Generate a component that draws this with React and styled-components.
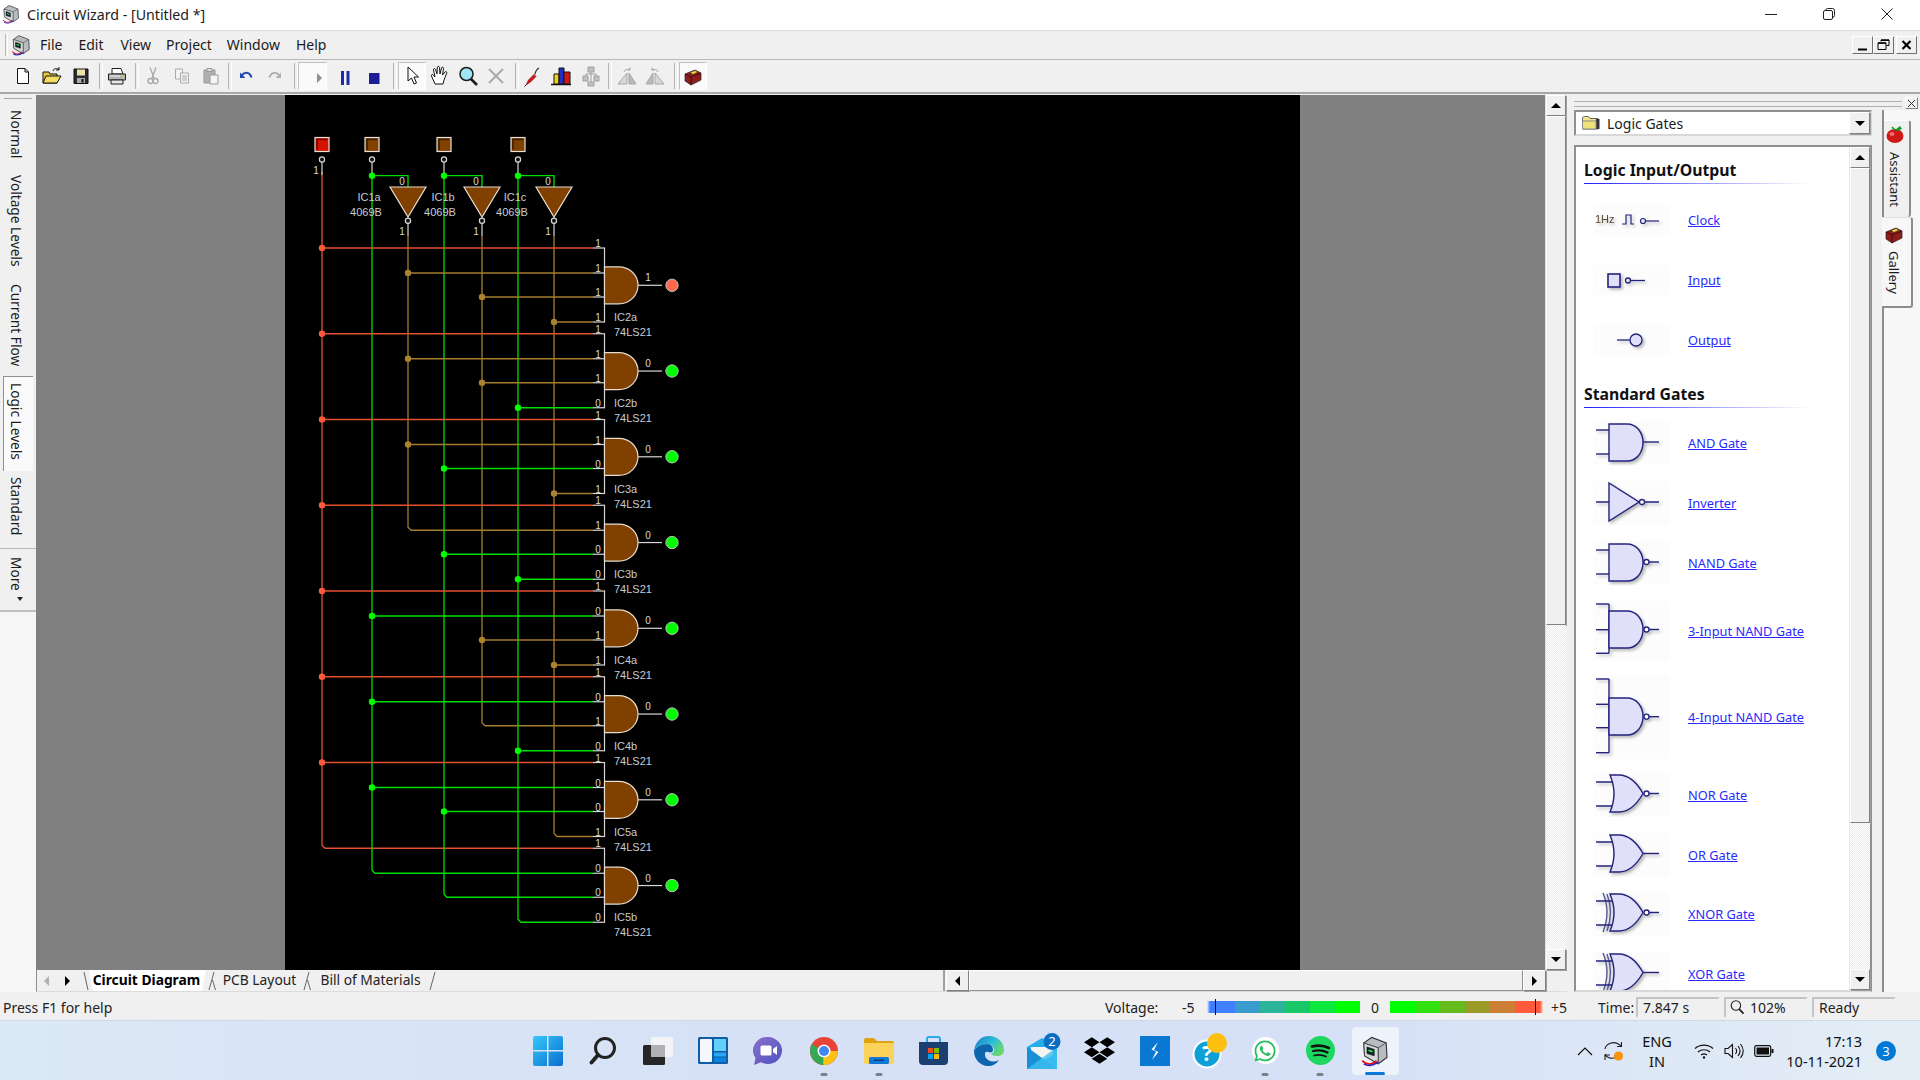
import React from 'react';
import styled, { createGlobalStyle } from 'styled-components';
import { FaWhatsapp, FaDropbox } from 'react-icons/fa';

const UI_FONT = '"Noto Sans", "Liberation Sans", sans-serif';

const GlobalStyle = createGlobalStyle`
  html, body { margin: 0; padding: 0; background: #f0f0f0; }
  * { box-sizing: border-box; }
  body { font-family: ${UI_FONT}; color: #1c1c1c; }
`;

const Window = styled.div`
  width: 1920px;
  height: 1080px;
  display: flex;
  flex-direction: column;
  overflow: hidden;
  background: #f0f0f0;
`;

/* ---------- title bar ---------- */
const TitleBar = styled.div`
  height: 30px;
  flex: none;
  background: #fff;
  display: flex;
  align-items: center;
  padding: 0 4px 2px 1px;
  font-size: 14.2px;
`;

const TitleText = styled.span`
  flex: 1;
  margin-left: 6px;
`;

const Caption = styled.div`
  width: 58px;
  height: 28px;
  display: flex;
  align-items: center;
  justify-content: center;
`;

/* ---------- menu ---------- */
const MenuBar = styled.div`
  height: 30px;
  flex: none;
  display: flex;
  align-items: center;
  border-top: 1px solid #dcdcdc;
  border-bottom: 1px solid #b8b8b8;
  padding: 0 0 1px 5px;
  font-size: 14px;
`;

const Grip = styled.div`
  width: 3px;
  height: 22px;
  flex: none;
  border-left: 1px solid #b8b8b8;
  border-right: 1px solid #fff;
`;

const MenuIconWrap = styled.div`
  width: 25px;
  display: flex;
  justify-content: center;
`;

const MenuItem = styled.span`
  padding: 0 ${(p) => p.$pad || 7}px;
`;

const MdiButtons = styled.div`
  margin-left: auto;
  display: flex;
  padding-right: 3px;
`;

const MdiButton = styled.div`
  width: 21px;
  height: 18px;
  margin-left: ${(p) => p.$ml || 0}px;
  display: flex;
  align-items: center;
  justify-content: center;
  background: #f0f0f0;
  border: 1px solid;
  border-color: #fff #707070 #707070 #fff;
`;

/* ---------- toolbar ---------- */
const ToolBar = styled.div`
  height: 34px;
  flex: none;
  display: flex;
  align-items: center;
  padding-left: 8px;
  border-bottom: 2px solid #a8a8a8;
`;

const ToolButton = styled.div`
  width: ${(p) => p.$w || 29}px;
  height: 28px;
  flex: none;
  display: flex;
  align-items: center;
  justify-content: center;
  ${(p) => p.$pressed && `
    background: #fafafa;
    border: 1px solid;
    border-color: #c0c0c0 #fff #fff #c0c0c0;
  `}
`;

const ToolSep = styled.div`
  width: ${(p) => p.$w}px;
  height: 26px;
  flex: none;
  position: relative;
  &::after {
    content: '';
    display: ${(p) => (p.$blank ? 'none' : 'block')};
    position: absolute;
    left: 50%;
    top: 0;
    bottom: 0;
    width: 2px;
    border-left: 1px solid #b4b4b4;
    border-right: 1px solid #fff;
  }
`;

/* ---------- main ---------- */
const Main = styled.div`
  flex: 1;
  display: flex;
  min-height: 0;
`;

const ViewTabs = styled.div`
  width: 36px;
  flex: none;
  display: flex;
  flex-direction: column;
  background: #f6f6f6;
`;

const ViewTabsInner = styled.div`
  height: 518px;
  background: #f0f0f0;
  border-bottom: 2px solid #c0c0c0;
  padding-top: 4px;
  display: flex;
  flex-direction: column;
  align-items: stretch;
`;

const TopRule = styled.div`
  height: 1px;
  margin: 0 4px 11px;
  background: #a8a8a8;
`;

const ViewTab = styled.div`
  writing-mode: vertical-rl;
  font-size: 13.7px;
  line-height: 28px;
  height: ${(p) => p.$h}px;
  flex: none;
  padding-top: ${(p) => p.$top || 0}px;
  padding-right: 6px;
  white-space: nowrap;
  ${(p) => p.$active && `
    background: #fafafa;
    border-top: 1px solid #909090;
    border-left: 1px solid #909090;
    margin: 0 3px;
    padding-right: 3px;
  `}
  ${(p) => p.$rule && 'border-bottom: 1px solid #b8b8b8;'}
`;

const MoreArrow = styled.span`
  display: inline-block;
  width: 0;
  height: 0;
  margin-top: 6px;
  vertical-align: middle;
  border-left: 3px solid transparent;
  border-right: 3px solid transparent;
  border-top: 4px solid #222;
`;

const Center = styled.div`
  width: 1531px;
  flex: none;
  display: flex;
  flex-direction: column;
`;

const CanvasRow = styled.div`
  height: 876px;
  flex: none;
  display: flex;
  padding-top: 1px;
`;

const Canvas = styled.div`
  width: 1509px;
  flex: none;
  background: #808080;
  padding-left: 249px;
`;

const Sheet = styled.div`
  width: 1015px;
  height: 100%;
  background: #000;
`;

const VScroll = styled.div`
  width: 21px;
  flex: none;
  display: flex;
  flex-direction: column;
  background: #f0f0f0;
  border-left: 1px solid #e0e0e0;
`;

const ScrollBtn = styled.div`
  width: ${(p) => p.$w || '100%'};
  height: ${(p) => p.$h || '21px'};
  flex: none;
  background: #f0f0f0;
  display: flex;
  align-items: center;
  justify-content: center;
  border: 1px solid;
  border-color: #fff #808080 #808080 #fff;
  box-shadow: 1px 1px 0 #a0a0a0;
`;

const Thumb = styled.div`
  height: ${(p) => p.$h}px;
  flex: none;
  background: #f0f0f0;
  border: 1px solid;
  border-color: #fff #808080 #808080 #fff;
  box-shadow: 1px 1px 0 #a0a0a0;
`;

const Track = styled.div`
  flex: 1;
  background: repeating-conic-gradient(#fdfdfd 0 25%, #ececec 0 50%) 0 0 / 2px 2px;
`;

const Arrow = styled.span`
  width: 0;
  height: 0;
  ${(p) => p.$dir === 'up' && `border-left:5px solid transparent;border-right:5px solid transparent;border-bottom:5px solid ${p.$c || '#000'};`}
  ${(p) => p.$dir === 'down' && `border-left:5px solid transparent;border-right:5px solid transparent;border-top:5px solid ${p.$c || '#000'};`}
  ${(p) => p.$dir === 'left' && `border-top:5px solid transparent;border-bottom:5px solid transparent;border-right:5px solid ${p.$c || '#000'};`}
  ${(p) => p.$dir === 'right' && `border-top:5px solid transparent;border-bottom:5px solid transparent;border-left:5px solid ${p.$c || '#000'};`}
`;

/* ---------- sheet tabs under the canvas ---------- */
const SheetTabs = styled.div`
  height: 22px;
  flex: none;
  display: flex;
  align-items: stretch;
  font-size: 13.8px;
  border-left: 1px solid #909090;
  border-bottom: 1px solid #dcdcdc;
`;

const TabArrows = styled.div`
  width: 46px;
  flex: none;
  display: flex;
  align-items: center;
  gap: 16px;
  padding-left: 7px;
`;

const SheetTab = styled.div`
  width: ${(p) => p.$w}px;
  flex: none;
  text-align: center;
  line-height: 20px;
  white-space: nowrap;
  font-weight: ${(p) => (p.$active ? 700 : 400)};
  background: ${(p) => (p.$active ? '#fff' : 'transparent')};
  color: ${(p) => (p.$active ? '#000' : '#222')};
  padding-right: ${(p) => (p.$active ? 2 : 0)}px;
  ${(p) => p.$active && 'clip-path: polygon(0 0, 100% 0, calc(100% - 4px) 100%, 4px 100%);'}
`;

const TabStroke = styled.svg`
  flex: none;
  display: block;
  align-self: center;
  fill: none;
  stroke: #666;
`;

const HScroll = styled.div`
  margin-left: auto;
  margin-right: 21px;
  width: 603px;
  display: flex;
  align-items: stretch;
  border-left: 2px solid #a0a0a0;
  padding-left: 1px;
`;

const HThumb = styled.div`
  flex: 1;
  background: #f0f0f0;
  border: 1px solid;
  border-color: #fff #909090 #909090 #fff;
`;

/* ---------- right dock ---------- */
const Dock = styled.div`
  flex: 1;
  display: flex;
  flex-direction: column;
  padding-left: 7px;
`;

const DockHead = styled.div`
  height: 16px;
  flex: none;
  display: flex;
  align-items: center;
  gap: 3px;
  padding-top: 2px;
`;

const DockGrip = styled.div`
  flex: 1;
  height: 6px;
  border-top: 1px solid #b0b0b0;
  border-bottom: 1px solid #b0b0b0;
  margin-top: 1px;
`;

const DockClose = styled.div`
  width: 13px;
  height: 12px;
  display: flex;
  align-items: center;
  justify-content: center;
  margin-right: 2px;
  border: 1px solid;
  border-color: #fff #808080 #808080 #fff;
`;

const DockBody = styled.div`
  flex: 1;
  display: flex;
  min-height: 0;
`;

const DockMain = styled.div`
  width: 298px;
  flex: none;
  display: flex;
  flex-direction: column;
  gap: 9px;
`;

const Combo = styled.div`
  height: 26px;
  flex: none;
  background: #fff;
  display: flex;
  align-items: center;
  border: 2px solid;
  border-color: #909090 #d8d8d8 #d8d8d8 #909090;
  padding-left: 5px;
  gap: 6px;
  font-size: 14px;
`;

const ComboLabel = styled.span`
  flex: 1;
`;

const GalleryFrame = styled.div`
  flex: 1;
  min-height: 0;
  display: flex;
  background: #fff;
  border: 2px solid;
  border-color: #909090 #909090 #d8d8d8 #909090;
`;

const GalleryList = styled.div`
  flex: 1;
  overflow: hidden;
  padding: 13px 0 0 8px;
`;

const GroupTitle = styled.div`
  font-size: 15.8px;
  font-weight: 700;
  line-height: 20px;
  color: #111;
  margin-top: ${(p) => p.$top || 0}px;
  &::after {
    content: '';
    display: block;
    width: 226px;
    height: 1px;
    margin-top: 3px;
    background: linear-gradient(90deg, #2020ff, #ffffff);
  }
`;

const Rows = styled.div`
  margin-top: ${(p) => p.$top}px;
`;

const GalleryRow = styled.div`
  height: ${(p) => p.$h || 60}px;
  display: flex;
  align-items: center;
`;

const IconCell = styled.div`
  width: 76px;
  margin-left: 9px;
  margin-right: 19px;
  flex: none;
  display: flex;
  align-items: center;
  background: #fcfcfc;
`;

const ItemLink = styled.a`
  font-size: 12.8px;
  color: #2a2aff;
  text-decoration: underline;
`;

const GalleryScroll = styled.div`
  width: 21px;
  flex: none;
  display: flex;
  flex-direction: column;
  border-left: 1px solid #e8e8e8;
  background: #f0f0f0;
`;

const SideTabs = styled.div`
  flex: 1;
  margin-left: 10px;
  background: #f7f7f7;
  border-left: 2px solid #8c8c8c;
  padding-top: 10px;
  display: flex;
  flex-direction: column;
`;

const SideTab = styled.div`
  height: ${(p) => p.$h}px;
  width: ${(p) => (p.$active ? 31 : 27)}px;
  flex: none;
  display: flex;
  flex-direction: column;
  align-items: center;
  font-size: 13px;
  padding-top: ${(p) => p.$pt || 0}px;
  padding-right: ${(p) => (p.$active ? 5 : 3)}px;
  gap: ${(p) => (p.$active ? 7 : 8)}px;
  margin-left: ${(p) => (p.$active ? -2 : 0)}px;
  background: ${(p) => (p.$active ? '#f7f7f7' : '#f0f0f0')};
  border-right: 2px solid #8c8c8c;
  border-top: 1px solid ${(p) => (p.$active ? '#e0e0e0' : '#fff')};
  border-bottom: ${(p) => (p.$active ? '2px solid #8c8c8c' : '0')};
  border-radius: 0 3px 3px 0;
`;

const SideLabel = styled.span`
  writing-mode: vertical-rl;
  white-space: nowrap;
`;

/* ---------- status bar ---------- */
const StatusBar = styled.div`
  height: 28px;
  flex: none;
  display: flex;
  align-items: center;
  padding: 2px 0 0 3px;
  font-size: 14px;
  color: #222;
`;

const VoltLabel = styled.span`
  width: ${(p) => p.$w}px;
  flex: none;
  white-space: nowrap;
  text-align: ${(p) => p.$align || 'left'};
  padding-left: ${(p) => p.$pl || 0}px;
`;

const VoltBar = styled.div`
  width: ${(p) => p.$w}px;
  height: 12px;
  flex: none;
  display: flex;
  position: relative;
`;

const VoltSeg = styled.div`
  flex: ${(p) => p.$grow || 1};
  background: ${(p) => p.$bg};
`;

const VoltMark = styled.div`
  position: absolute;
  top: -2px;
  bottom: -2px;
  left: ${(p) => p.$x}px;
  width: 1px;
  background: #111;
`;

const StatusBox = styled.div`
  width: 84px;
  height: 21px;
  flex: none;
  margin-left: ${(p) => p.$ml ?? 4}px;
  display: flex;
  align-items: center;
  gap: 5px;
  padding-left: ${(p) => p.$pl || 5}px;
  border: 2px solid;
  border-color: #c4c4c4 #f0f0f0 #f0f0f0 #c4c4c4;
`;

/* ---------- taskbar ---------- */
const TaskBar = styled.div`
  height: 60px;
  flex: none;
  display: flex;
  align-items: center;
  padding-left: 520px;
  background: linear-gradient(90deg, #dbe8f5 0%, #d6e1f6 40%, #d6e0f6 70%, #e3eef6 100%);
  border-top: 1px solid #cfd8e8;
`;

const TaskItem = styled.div`
  width: ${(p) => (p.$active ? 47 : 55.2)}px;
  height: ${(p) => (p.$active ? 48 : 60)}px;
  margin: ${(p) => (p.$active ? '0 4px' : '0')};
  flex: none;
  position: relative;
  display: flex;
  align-items: center;
  justify-content: center;
  border-radius: 4px;
  background: ${(p) => (p.$active ? '#eef3fb' : 'transparent')};
`;

const TaskDot = styled.span`
  position: absolute;
  left: 50%;
  bottom: ${(p) => (p.$active ? 0 : 5)}px;
  width: ${(p) => (p.$active ? 20 : 7)}px;
  height: 3px;
  border-radius: 2px;
  transform: translateX(-50%);
  background: ${(p) => (p.$active ? '#0a78d6' : '#7b8088')};
`;

const Tray = styled.div`
  margin-left: auto;
  display: flex;
  align-items: center;
  font-size: 14.5px;
  color: #111;
  padding-right: 24px;
`;

const TrayIcon = styled.div`
  width: ${(p) => p.$w}px;
  flex: none;
  display: flex;
  justify-content: center;
`;

const TrayLang = styled.div`
  width: 58px;
  text-align: center;
  line-height: 20px;
`;

const TrayClock = styled.div`
  width: 78px;
  margin-left: 2px;
  text-align: right;
  line-height: 20px;
  white-space: nowrap;
`;

const Badge = styled.div`
  width: 20px;
  height: 20px;
  margin-left: 14px;
  border-radius: 50%;
  background: #0078d4;
  color: #fff;
  font-size: 13px;
  text-align: center;
  line-height: 20px;
`;

/* ---------- icons ---------- */
const AppIcon = ({ size = 20 }) => (
  <svg width={size} height={size} viewBox="0 0 20 20">
    <path d="M3 5 8 1.500 17 5 17.500 14 12 18 3.500 13z" fill="#b9bcc0" stroke="#333" strokeWidth=".7" />
    <path d="M3 5 12 8 17 5M12 8 12 18" fill="none" stroke="#555" strokeWidth=".6" />
    <path d="M3 5 12 8 12 18 3.500 13z" fill="#d5d7d8" stroke="#444" strokeWidth=".6" />
    <path d="M5 7.500 9.500 9 9.500 13 5 11.500z" fill="#123" stroke="#111" strokeWidth=".4" />
    <path d="M6 9.500 8.500 10.500" stroke="#2f2" strokeWidth="1" />
    <path d="M2 16C5 19 8 19 11 16" fill="none" stroke="#e11" strokeWidth="1" />
    <path d="M3 18C6 20 9 19 12 17" fill="none" stroke="#22c" strokeWidth="1" />
  </svg>
);

const AppleIcon = () => (
  <svg width="20" height="20" viewBox="0 0 20 20">
    <ellipse cx="10" cy="12" rx="8.500" ry="7" fill="#d01818" />
    <ellipse cx="7" cy="10" rx="2.500" ry="2" fill="#f07070" />
    <path d="M10 6 15 2 17 5 12 7z" fill="#129a20" />
    <path d="M10 6 7 3" stroke="#129a20" strokeWidth="1.500" />
  </svg>
);

const Toolbox = ({ size = 20 }) => (
  <svg width={size} height={size} viewBox="0 0 20 20">
    <path d="M2 8 12 4 18 7 18 14 8 19 2 15z" fill="#8d1c1c" stroke="#222" strokeWidth=".7" />
    <path d="M2 8 8 11 18 7M8 11 8 19" fill="none" stroke="#300" strokeWidth=".7" />
    <path d="M7 6.500 12 4.500 15 6 10 8.500z" fill="#f4d23a" stroke="#222" strokeWidth=".5" />
  </svg>
);

const Doc = () => (
  <svg width="20" height="20" viewBox="0 0 20 20">
    <path d="M4.500 2.500h7.500l3.500 3.500v11.500h-11z" fill="#fff" stroke="#111" />
    <path d="M12 2.500v3.500h3.500" fill="none" stroke="#111" />
  </svg>
);
const OpenFolder = () => (
  <svg width="22" height="20" viewBox="0 0 22 20">
    <path d="M2 17V6h6l1 2h7v9z" fill="#e8c53a" stroke="#111" />
    <path d="M2 17 5 10h15l-4 7z" fill="#f3dd62" stroke="#111" />
    <path d="M12 5C13 2 16 2 18 3.500M18 1v3h-3" fill="none" stroke="#111" />
  </svg>
);
const Floppy = () => (
  <svg width="20" height="20" viewBox="0 0 20 20">
    <path d="M3 3h14v14.500H3z" fill="#2b2b33" stroke="#111" />
    <rect x="6" y="3.500" width="8" height="6" fill="#e9e3a8" />
    <rect x="6" y="12" width="8" height="5" fill="#aaa" />
    <rect x="10.500" y="13" width="2" height="3.500" fill="#111" />
  </svg>
);
const Printer = () => (
  <svg width="22" height="20" viewBox="0 0 22 20">
    <path d="M6 8V2.500h9L17 8z" fill="#fff" stroke="#222" />
    <path d="M2.500 8h17v6h-17z" fill="#b4b4b4" stroke="#222" />
    <path d="M5 14h12v4H5z" fill="#e8e8e8" stroke="#222" />
    <path d="M4 10h10" stroke="#eee" />
    <path d="M15.500 10h2" stroke="#e6c93a" strokeWidth="1.500" />
  </svg>
);
const Scissors = () => (
  <svg width="20" height="20" viewBox="0 0 20 20" fill="none" stroke="#a8a8a8" strokeWidth="1.300">
    <path d="M7 1.500 11 12M13 1.500 9 12" />
    <circle cx="7.500" cy="15" r="2.500" />
    <circle cx="12.500" cy="15" r="2.500" />
  </svg>
);
const CopyIcon = () => (
  <svg width="20" height="20" viewBox="0 0 20 20" fill="#f2f2f2" stroke="#ababab">
    <path d="M3.500 3h7v10h-7z" />
    <path d="M8.500 7h8v10h-8z" />
    <path d="M10 10h5M10 12h5M10 14h5" />
  </svg>
);
const PasteIcon = () => (
  <svg width="20" height="20" viewBox="0 0 20 20">
    <path d="M3 4h11v13H3z" fill="#b0b0b0" stroke="#999" />
    <path d="M6 2.500h5v3H6z" fill="#ddd" stroke="#999" />
    <path d="M9 9h8v9H9z" fill="#f4f4f4" stroke="#999" />
  </svg>
);
const UndoIcon = ({ c, flip }) => (
  <svg width="18" height="16" viewBox="0 0 18 16" style={flip ? { transform: 'scaleX(-1)' } : undefined}>
    <path d="M3 4.500V10h5.500z" fill={c} />
    <path d="M5 7C8 3.500 13 4 14.500 9.500" fill="none" stroke={c} strokeWidth="2" />
  </svg>
);
const PlayIcon = () => (
  <svg width="27" height="26" viewBox="0 0 27 26">
    <path d="M18 10v10l5-5z" fill="#8e8e8e" />
  </svg>
);
const PauseIcon = () => (
  <svg width="16" height="20" viewBox="0 0 16 20">
    <path d="M4 5h3v14H4zM9.500 5h3v14h-3z" fill="#1c2aa8" />
  </svg>
);
const StopIcon = () => (
  <svg width="16" height="20" viewBox="0 0 16 20">
    <path d="M3 7h10.500v11H3z" fill="#1c1c96" />
  </svg>
);
const Pointer = () => (
  <svg width="22" height="22" viewBox="0 0 22 22">
    <path d="M7 2v14l3.500-3 2.500 6 2.500-1-2.500-6h4.500z" fill="#fff" stroke="#111" />
  </svg>
);
const Hand = () => (
  <svg width="22" height="22" viewBox="0 0 22 22">
    <path d="M6 19 2.500 11c-.6-1.500 1-2 1.800-1L6 12 4.500 5c-.3-1.500 1.500-2 2-.6L8 9l.3-6.500c0-1.500 2-1.500 2.200 0L11 9l1.500-6c.4-1.400 2.200-1 2 .4L13.500 10l2.500-3c1-1 2.300 0 1.700 1.200L15 15l-1 4z" fill="#fff" stroke="#111" />
  </svg>
);
const Magnifier = ({ lens = '#9fe6f5', c = '#1c1c1c', w = 22 }) => (
  <svg width={w} height={w} viewBox="0 0 22 22">
    <circle cx="9.500" cy="9" r="6.500" fill={lens} stroke={c} strokeWidth="1.500" />
    <path d="M14 14 20 20" stroke={c} strokeWidth="2.600" />
  </svg>
);
const GreyX = () => (
  <svg width="20" height="20" viewBox="0 0 20 20">
    <path d="M3 3 17 17M17 3 3 17" stroke="#a6a6a6" strokeWidth="1.800" />
  </svg>
);
const Probe = () => (
  <svg width="22" height="22" viewBox="0 0 22 22">
    <path d="M4 20 6.500 15 12 9.500 14 11.500 8.500 17z" fill="#d8141c" stroke="#700" strokeWidth=".6" />
    <path d="M13 9.500C13.500 6 15 4 17 3" fill="none" stroke="#333" strokeWidth="1.200" />
    <path d="M4 20 2.500 21.500" stroke="#222" />
  </svg>
);
const Bars = () => (
  <svg width="22" height="22" viewBox="0 0 22 22">
    <path d="M1 19.500h20" stroke="#111" strokeWidth="1.500" />
    <path d="M4 9h5v10H4z" fill="#f0d020" stroke="#111" />
    <path d="M9 3h5v16H9z" fill="#2030c0" stroke="#111" />
    <path d="M14 7h6v12h-6z" fill="#d01818" stroke="#111" />
  </svg>
);
const GreyCircuit = () => (
  <svg width="22" height="22" viewBox="0 0 22 22" fill="#c0c0c0" stroke="#a0a0a0">
    <path d="M10 2h6v5h-6zM5 11h5v5H5zM16 11h5v5h-5zM10 17h6v4h-6z" />
    <path d="M13 7v10M8 11V9h10v2" fill="none" />
  </svg>
);
const GreyTri = ({ flip }) => (
  <svg width="22" height="20" viewBox="0 0 22 20" style={flip ? { transform: 'scaleX(-1)' } : undefined}>
    <path d="M2 18 11 7v11z" fill="#d8d8d8" stroke="#a8a8a8" />
    <path d="M13 18V7l7 11z" fill="#b8b8b8" stroke="#a8a8a8" />
    <path d="M8 6C9 3 12 3 14 4M14 1.500V4h-2.500" fill="none" stroke="#a0a0a0" />
  </svg>
);
const FolderTiny = () => (
  <svg width="20" height="18" viewBox="0 0 20 18">
    <path d="M1.500 15V4c0-1 1-1.500 2-1.500h4l1.500 2h8v10.500z" fill="#f0e58a" stroke="#666" />
    <path d="M15 5h3.500v10H15z" fill="#333" />
    <path d="M1.500 15 1.500 7H15v8z" fill="#efe27a" stroke="#888" />
  </svg>
);

/* gallery symbols: drawn 76 wide, inputs left, outputs right */
const INK = '#23237f';
const BODY = '#e0e0fb';

const Shadowed = styled.svg`
  display: block;
  filter: drop-shadow(2px 2.5px 1.5px rgba(60, 60, 60, 0.35));
  overflow: visible;
`;

const Bubble = ({ cx, cy }) => <circle cx={cx} cy={cy} r="2.500" fill="#fff" stroke={INK} strokeWidth="1.300" />;

const andBody = (top) => `M16 ${top}h18c9 0 16 8 16 18.500s-7 18.500-16 18.500H16z`;

const AndSym = ({ h = 44, top = 3, inputs = [9, 33], out = 21, bubble, bar }) => (
  <Shadowed width="76" height={h} viewBox={`0 0 76 ${h}`} fill="none" stroke={INK} strokeWidth="1.400">
    {inputs.map((y) => <path key={y} d={`M3 ${y}H16`} />)}
    {bar && <path d={`M16 ${inputs[0]}V${inputs[inputs.length - 1]}`} />}
    <path d={andBody(top)} fill={BODY} />
    <path d={`M${bubble ? 56 : 50} ${out}H66`} />
    {bubble && <Bubble cx={53.500} cy={out} />}
  </Shadowed>
);

const InverterSym = () => (
  <Shadowed width="76" height="44" viewBox="0 0 76 44" fill="none" stroke={INK} strokeWidth="1.400">
    <path d="M3 21H16M51 21H66" />
    <path d="M16 2V40L46 21z" fill={BODY} />
    <Bubble cx={49} cy={21} />
  </Shadowed>
);

const OrSym = ({ bubble, xor }) => (
  <Shadowed width="76" height="44" viewBox="0 0 76 44" fill="none" stroke={INK} strokeWidth="1.400">
    {xor && <path d="M10 1Q18 20 10 40M14 2Q21 20 14 39" stroke="#555a90" />}
    <path d="M3 9H20M3 33H20" />
    <path d="M17 2H26C36 2 44 10 50 20.500 44 31 36 39 26 39H17Q25 20.500 17 2z" fill={BODY} />
    <path d={`M${bubble ? 56 : 50} 20.500H66`} />
    {bubble && <Bubble cx={53.500} cy={20.500} />}
  </Shadowed>
);

const ClockSym = () => (
  <Shadowed width="76" height="30" viewBox="0 0 76 30" fill="none" stroke={INK} strokeWidth="1.200">
    <text x="2" y="18" fontSize="11" fill="#5a4a30" stroke="none" fontFamily="Liberation Sans, sans-serif">1Hz</text>
    <path d="M29 19H33V10H38V19H41" />
    <circle cx="50" cy="16" r="2.500" />
    <path d="M53 16H66" />
  </Shadowed>
);

const InputSym = () => (
  <Shadowed width="76" height="30" viewBox="0 0 76 30" fill="none" stroke={INK} strokeWidth="1.300">
    <rect x="15" y="9" width="12" height="13" fill={BODY} strokeWidth="1.600" />
    <circle cx="35" cy="15.500" r="2.500" />
    <path d="M38 15.500H52" />
  </Shadowed>
);

const OutputSym = () => (
  <Shadowed width="76" height="30" viewBox="0 0 76 30" fill="none" stroke={INK} strokeWidth="1.300">
    <path d="M24 15H37" />
    <circle cx="43" cy="15" r="6" fill={BODY} />
  </Shadowed>
);

/* ---------- circuit drawing ---------- */
const RED = '#e5512f';
const RED_DOT = '#ff5a3c';
const GREEN = '#00e000';
const GREEN_DOT = '#00ff00';
const TAN = '#a47c2c';
const TAN_DOT = '#ab832f';
const PIN = '#d8d8d8';
const COPPER = '#7f4000';

const GATE_COUNT = 8;
const gateTop = (i) => 248 + i * 85.75;
const PIN_OFF = [0, 25, 49, 74];
const GATE_NAMES = ['IC2a', 'IC2b', 'IC3a', 'IC3b', 'IC4a', 'IC4b', 'IC5a', 'IC5b'];

// bus x per input bit: index 0 = always high, 1..3 true or inverted rails
const RAILS = [
  { hi: { x: 322, c: RED, dot: RED_DOT } },
  { lo: { x: 372, c: GREEN, dot: GREEN_DOT }, hi: { x: 408, c: TAN, dot: TAN_DOT } },
  { lo: { x: 444, c: GREEN, dot: GREEN_DOT }, hi: { x: 482, c: TAN, dot: TAN_DOT } },
  { lo: { x: 518, c: GREEN, dot: GREEN_DOT }, hi: { x: 554, c: TAN, dot: TAN_DOT } },
];

const gateBits = (i) => [1, (i >> 2) & 1 ? 0 : 1, (i >> 1) & 1 ? 0 : 1, i & 1 ? 0 : 1];

const railFor = (pin, bit) => (bit ? RAILS[pin].hi : RAILS[pin].lo);

// the last gate that taps a rail is where it turns the corner
const lastUse = (pin, bit) => {
  let last = -1;
  for (let i = 0; i < GATE_COUNT; i += 1) {
    if (gateBits(i)[pin] === bit) last = i;
  }
  return last;
};

const CIRCUIT_TEXT = { fontFamily: '"Liberation Sans", sans-serif', stroke: 'none' };
const Label = ({ x, y, size = 11, children, anchor = 'middle', fill = PIN }) => (
  <text x={x} y={y} fontSize={size} textAnchor={anchor} style={{ ...CIRCUIT_TEXT, fill }}>{children}</text>
);

const RailWires = () => {
  const wires = [];
  RAILS.forEach((rail, pin) => {
    [['hi', 1], ['lo', 0]].forEach(([key, bit]) => {
      const r = rail[key];
      if (!r) return;
      const last = lastUse(pin, bit);
      const y = gateTop(last) + PIN_OFF[pin];
      let start = 175;
      if (r.c === RED) start = 172;
      if (r.c === TAN) start = 236;
      wires.push(
        <path
          key={`${pin}${key}`}
          d={`M${r.x} ${start}V${y - 3}L${r.x + 3} ${y}H593`}
          fill="none"
          stroke={r.c}
          strokeWidth="1.300"
        />,
      );
    });
  });
  return wires;
};

const Gate = ({ index }) => {
  const top = gateTop(index);
  const bits = gateBits(index);
  const on = index === 0;
  const outY = top + 37.300;
  return (
    <g>
      {bits.map((bit, pin) => {
        const y = top + PIN_OFF[pin];
        const rail = railFor(pin, bit);
        return (
          <g key={pin}>
            {index !== lastUse(pin, bit) && <path d={`M${rail.x} ${y}H593`} stroke={rail.c} strokeWidth="1.300" fill="none" />}
            {index !== lastUse(pin, bit) && <circle cx={rail.x} cy={y} r="3.200" fill={rail.dot} />}
            <path d={`M593 ${y}H604.500`} stroke={PIN} strokeWidth="1.200" />
            <Label x={598} y={y - 1} size={10}>{bit}</Label>
          </g>
        );
      })}
      <path d={`M604.500 ${top - 0.500}V${top + 74.500}`} stroke={PIN} strokeWidth="1.200" />
      <path
        d={`M604.500 ${top + 18.800}h14c12 0 19.500 9 19.500 18.500s-7.500 18.500-19.500 18.500h-14z`}
        fill={COPPER}
        stroke="#e6dcd0"
        strokeWidth="1.200"
      />
      <path d={`M638 ${outY}H662`} stroke={PIN} strokeWidth="1.200" />
      <Label x={648} y={outY - 4} size={10}>{on ? 1 : 0}</Label>
      <circle cx="672" cy={outY} r="6.200" fill={on ? '#ff6a4e' : GREEN_DOT} stroke="#bdbdbd" strokeWidth="1" />
      <Label x={614} y={top + 73} anchor="start" fill="#c4ccd8">{GATE_NAMES[index]}</Label>
      <Label x={614} y={top + 88} anchor="start" fill="#c4ccd8">74LS21</Label>
    </g>
  );
};

const Inverter = ({ railX, x, name }) => (
  <g>
    <Label x={x - 39} y={201} fill="#c4ccd8">{name}</Label>
    <Label x={x - 42} y={216} fill="#c4ccd8">4069B</Label>
    <path d={`M${railX} 175.700H${x}V187`} fill="none" stroke={GREEN} strokeWidth="1.300" />
    <circle cx={railX} cy="175.700" r="3.200" fill={GREEN_DOT} />
    <Label x={x - 6} y={185} size={10}>0</Label>
    <path d={`M${x - 18} 187H${x + 18}L${x} 217z`} fill={COPPER} stroke="#e6dcd0" strokeWidth="1.200" />
    <circle cx={x} cy="220.700" r="2.600" fill="#111" stroke={PIN} strokeWidth="1.200" />
    <path d={`M${x} 223V236`} stroke={PIN} strokeWidth="1.200" />
    <Label x={x - 6} y={235} size={10}>1</Label>
  </g>
);

const InputSwitch = ({ x, on }) => (
  <g>
    <rect x={x - 7} y="137.500" width="14" height="14" fill={on ? '#d41400' : COPPER} stroke="#e8e0d8" strokeWidth="1.200" />
    <path d={`M${x - 5} 149.500V139.500H${x + 5}`} fill="none" stroke={on ? '#700' : '#3c2000'} strokeWidth="1.600" />
    <circle cx={x} cy="159.500" r="2.600" fill="#111" stroke={PIN} strokeWidth="1.200" />
    <path d={`M${x} 162V175`} stroke={PIN} strokeWidth="1.200" />
  </g>
);

const Circuit = () => (
  <svg width="1015" height="875" viewBox="285 95 1015 875" style={{ display: 'block' }}>
    <RailWires />
    {[322, 372, 444, 518].map((x, i) => <InputSwitch key={x} x={x} on={i === 0} />)}
    <Label x={316} y={174} size={10}>1</Label>
    <Inverter railX={372} x={408} name="IC1a" />
    <Inverter railX={444} x={482} name="IC1b" />
    <Inverter railX={518} x={554} name="IC1c" />
    {GATE_NAMES.map((name, i) => <Gate key={name} index={i} />)}
  </svg>
);

/* ---------- taskbar icons ---------- */
const WinLogo = () => (
  <svg width="30" height="30" viewBox="0 0 30 30">
    <defs>
      <linearGradient id="winG" x1="0" y1="0" x2="1" y2="1">
        <stop offset="0" stopColor="#35c8fa" />
        <stop offset="1" stopColor="#0a6fd0" />
      </linearGradient>
    </defs>
    <path d="M0 2q0-2 2-2h12v14H0zM15.500 0H28q2 0 2 2v12H15.500zM0 15.500h14V30H2q-2 0-2-2zM15.500 15.500H30V28q0 2-2 2H15.500z" fill="url(#winG)" />
  </svg>
);
const SearchIcon = () => (
  <svg width="28" height="30" viewBox="0 0 28 30" fill="none" stroke="#222" strokeLinecap="round">
    <circle cx="16" cy="12" r="9.500" strokeWidth="3" />
    <path d="M9 19 2.500 26.500" strokeWidth="3.800" />
  </svg>
);
const TaskView = () => (
  <svg width="30" height="28" viewBox="0 0 30 28">
    <rect x="8" y="0" width="22" height="20" rx="1.500" fill="#f4f4f6" />
    <rect x="0" y="8" width="22" height="20" rx="1.500" fill="#262626" />
    <rect x="8" y="8" width="14" height="12" fill="#aeb0b4" />
  </svg>
);
const Widgets = () => (
  <svg width="30" height="27" viewBox="0 0 30 27">
    <rect width="30" height="27" rx="1.500" fill="#0f5ca8" />
    <rect x="2" y="2" width="12" height="23" rx="1" fill="#f4f7fb" />
    <rect x="16" y="2" width="12" height="12" fill="#63d0fc" />
    <rect x="16" y="15.500" width="12" height="4" fill="#2ba6f0" />
    <rect x="16" y="20.500" width="12" height="4.500" fill="#0d84e0" />
  </svg>
);
const ChatIcon = () => (
  <svg width="30" height="30" viewBox="0 0 30 30">
    <defs>
      <linearGradient id="chatG" x1="0" y1="0" x2="1" y2="1">
        <stop offset="0" stopColor="#8a70c8" />
        <stop offset="1" stopColor="#4f52c4" />
      </linearGradient>
    </defs>
    <path d="M15 1a14 13.500 0 1 1-7 25.200L1 29l1.500-7A14 13.500 0 0 1 15 1z" fill="url(#chatG)" />
    <rect x="7.500" y="9.500" width="11" height="10" rx="1.500" fill="#fff" />
    <path d="M20 13l4-3v9l-4-3z" fill="#fff" />
  </svg>
);
const ChromeIcon = () => (
  <svg width="28" height="28" viewBox="0 0 28 28">
    <circle cx="14" cy="14" r="14" fill="#ea4335" />
    <path d="M14 14H28A14 14 0 0 1 14 28L7 16z" fill="#fbc116" />
    <path d="M14 14 13 28A14 14 0 0 1 1.900 7z" fill="#34a853" />
    <circle cx="14" cy="14" r="6.500" fill="#fff" />
    <circle cx="14" cy="14" r="5" fill="#4285f4" />
  </svg>
);
const FolderIcon = () => (
  <svg width="30" height="26" viewBox="0 0 30 26">
    <path d="M0 2q0-2 2-2h8l3 3h15q2 0 2 2v3H0z" fill="#e0a30f" />
    <path d="M0 5h30v19q0 2-2 2H2q-2 0-2-2z" fill="#fbd35a" />
    <rect x="5" y="19" width="20" height="7" rx="1.500" fill="#0f78d4" />
    <rect x="10" y="21.500" width="10" height="1.500" fill="#063e80" />
  </svg>
);
const StoreIcon = () => (
  <svg width="29" height="29" viewBox="0 0 29 29">
    <path d="M8 7V3q0-2 2-2h9q2 0 2 2v4" fill="none" stroke="#2aa8e8" strokeWidth="2" />
    <path d="M0 6h29v19q0 4-4 4H4q-4 0-4-4z" fill="#1c3f72" />
    <rect x="9" y="12" width="5" height="5" fill="#f25022" />
    <rect x="15" y="12" width="5" height="5" fill="#7fba00" />
    <rect x="9" y="18" width="5" height="5" fill="#00a4ef" />
    <rect x="15" y="18" width="5" height="5" fill="#ffb900" />
  </svg>
);
const EdgeIcon = () => (
  <svg width="30" height="30" viewBox="0 0 30 30">
    <defs>
      <linearGradient id="edgeG" x1="0" y1="0" x2="1" y2=".6">
        <stop offset="0" stopColor="#1677c8" />
        <stop offset=".6" stopColor="#2dc0d8" />
        <stop offset="1" stopColor="#6bd86a" />
      </linearGradient>
    </defs>
    <path d="M15 0c9 0 15 6.500 15 14 0 4-3 6-7 6-3 0-5-1-6-2 2-1 3-2 3-4 0-3-3-6-7-6C7 8 2 11 0 15 1 6 7 0 15 0z" fill="url(#edgeG)" />
    <path d="M0 15c2-4 7-7 13-7 4 0 6 3 6 6 0 2-2 3-5 2-3-1-4 2-2 6 2 3 7 5 13 2-3 4-6 6-11 6-8 0-14-7-14-15z" fill="#0f65ad" />
  </svg>
);
const MailIcon = () => (
  <svg width="34" height="36" viewBox="0 0 34 36">
    <path d="M0 14 15 5l15 9v22H0z" fill="#27aee8" />
    <path d="M4 14h22v8l-11 6-11-6z" fill="#f4f4f2" />
    <path d="M0 14 30 36H0z" fill="#1a8fd8" />
    <path d="M0 36 30 14v22z" fill="#3cc0f0" opacity=".8" />
    <circle cx="25" cy="8.500" r="8.500" fill="#0a6fc4" />
    <text x="25" y="13" textAnchor="middle" fontSize="13" fill="#fff" fontFamily="Noto Sans, sans-serif">2</text>
  </svg>
);
const STile = () => (
  <svg width="30" height="30" viewBox="0 0 30 30">
    <rect width="30" height="30" fill="#0a78d2" />
    <path d="M18 6 11.500 13.500 16 15.500 12 24 18.500 16 14 14z" fill="#fff" />
  </svg>
);
const HelpIcon = () => (
  <svg width="36" height="36" viewBox="0 0 36 36">
    <circle cx="15" cy="21" r="13.500" fill="#0d9fd8" stroke="#fff" strokeWidth="2" />
    <text x="15" y="28" textAnchor="middle" fontSize="21" fontWeight="700" fill="#fff" fontFamily="Noto Sans, sans-serif">?</text>
    <circle cx="25" cy="10" r="10" fill="#fdc010" />
  </svg>
);
const SpotifyIcon = () => (
  <svg width="29" height="29" viewBox="0 0 29 29" fill="none" stroke="#111" strokeLinecap="round">
    <circle cx="14.500" cy="14.500" r="14.500" fill="#1ed760" stroke="none" />
    <path d="M6 10.500c6-1.500 12-1 17 1.500" strokeWidth="2.600" />
    <path d="M7 15c5-1 10-.8 14.500 1.500" strokeWidth="2.200" />
    <path d="M8 19.500c4-1 9-.5 12 1" strokeWidth="1.800" />
  </svg>
);
const WhatsAppWrap = styled.div`
  width: 27px;
  height: 27px;
  display: flex;
  align-items: center;
  justify-content: center;
  border-radius: 50%;
  background: #fff;
  color: #22c15e;
`;

const Chevron = () => (
  <svg width="16" height="10" viewBox="0 0 16 10" fill="none" stroke="#111" strokeWidth="1.200">
    <path d="M1 9 8 2l7 7" />
  </svg>
);
const SyncIcon = () => (
  <svg width="22" height="22" viewBox="0 0 22 22" fill="none" stroke="#222" strokeWidth="1.100">
    <path d="M2 9C3 4 10 0 17 5l1.500 1.500M18.500 2v4.500H14" />
    <path d="M14 17C8 20 3 17 2 14M2 20v-5h5" />
    <circle cx="15.500" cy="16" r="4.600" fill="#f7920f" stroke="none" />
  </svg>
);
const Wifi = () => (
  <svg width="20" height="16" viewBox="0 0 20 16" fill="none" stroke="#111" strokeWidth="1.200">
    <path d="M1 5.500c5-4.500 13-4.500 18 0M4 9c3.500-3 8.500-3 12 0M7 12c2-1.500 4-1.500 6 0" />
    <circle cx="10" cy="14.500" r="1.200" fill="#111" stroke="none" />
  </svg>
);
const Speaker = () => (
  <svg width="20" height="16" viewBox="0 0 20 16" fill="none" stroke="#111" strokeWidth="1.100">
    <path d="M1 5.500h3L8.500 1.500v13L4 10.500H1z" />
    <path d="M11.500 5c1.500 2 1.500 4 0 6M14 3c2.500 3 2.500 7 0 10M16.500 1c3.500 4.500 3.500 9.500 0 14" />
  </svg>
);
const Battery = () => (
  <svg width="20" height="12" viewBox="0 0 20 12">
    <rect x=".7" y=".7" width="16" height="10.600" rx="1.800" fill="none" stroke="#111" strokeWidth="1.200" />
    <rect x="2.500" y="2.500" width="12.500" height="7" fill="#111" />
    <rect x="17.500" y="4" width="2" height="4" fill="#111" />
  </svg>
);

const MinIcon = () => <svg width="12" height="10" viewBox="0 0 12 10"><path d="M0 5.500h12" stroke="#222" /></svg>;
const RestoreIcon = () => (
  <svg width="12" height="12" viewBox="0 0 12 12" fill="none" stroke="#222">
    <rect x=".5" y="2.500" width="9" height="9" rx="1.500" />
    <path d="M3 2.500V1.800Q3 .5 4.500 .5h5Q11.500 .5 11.500 2.500v5Q11.500 9 10 9h-.5" />
  </svg>
);
const CloseIcon = () => <svg width="12" height="12" viewBox="0 0 12 12"><path d="M.5.5l11 11M11.500.5l-11 11" stroke="#222" /></svg>;
const MdiX = () => <svg width="11" height="10" viewBox="0 0 11 10"><path d="M1.500 1l8 8M9.500 1l-8 8" stroke="#000" strokeWidth="2.200" /></svg>;
const MdiMin = () => <svg width="11" height="12" viewBox="0 0 11 12"><path d="M1 10.500h9" stroke="#000" strokeWidth="2" /></svg>;
const MdiRestore = () => (
  <svg width="13" height="11" viewBox="0 0 13 11" fill="none" stroke="#000">
    <path d="M4 2.500V1h8v5.500H9.500" strokeWidth="1" />
    <path d="M1 4h8v6.500H1z" />
    <path d="M1 4h8M4 1.300h8" strokeWidth="1.500" />
  </svg>
);

const MENU = [['File', 7], ['Edit', 9], ['View', 8], ['Project', 7], ['Window', 8], ['Help', 8]];

const GROUP_ONE = [
  { label: 'Clock', icon: <ClockSym /> },
  { label: 'Input', icon: <InputSym /> },
  { label: 'Output', icon: <OutputSym /> },
];

const GROUP_TWO = [
  { label: 'AND Gate', icon: <AndSym /> },
  { label: 'Inverter', icon: <InverterSym /> },
  { label: 'NAND Gate', icon: <AndSym bubble /> },
  { label: '3-Input NAND Gate', h: 76, icon: <AndSym bubble bar h={60} top={10} inputs={[3, 28.700, 52.300]} out={28.500} /> },
  { label: '4-Input NAND Gate', h: 95, icon: <AndSym bubble bar h={84} top={23} inputs={[4, 29.300, 52.700, 77.700]} out={41.700} /> },
  { label: 'NOR Gate', h: 61, icon: <OrSym bubble /> },
  { label: 'OR Gate', h: 59, icon: <OrSym /> },
  { label: 'XNOR Gate', icon: <OrSym bubble xor /> },
  { label: 'XOR Gate', icon: <OrSym xor /> },
];

const SCALE_LOW = ['#4080ff', '#3a9ccc', '#2cb59a', '#18c868', '#0ce840', '#00ff00'];
const SCALE_HIGH = ['#00ff00', '#33e010', '#66bb1c', '#999a28', '#cc7f34', '#ff5a3c'];

const TASK_ICONS = [
  { id: 'win', icon: <WinLogo /> },
  { id: 'search', icon: <SearchIcon /> },
  { id: 'view', icon: <TaskView /> },
  { id: 'widgets', icon: <Widgets /> },
  { id: 'chat', icon: <ChatIcon /> },
  { id: 'chrome', icon: <ChromeIcon />, dot: true },
  { id: 'files', icon: <FolderIcon />, dot: true },
  { id: 'store', icon: <StoreIcon /> },
  { id: 'edge', icon: <EdgeIcon /> },
  { id: 'mail', icon: <MailIcon /> },
  { id: 'dropbox', icon: <FaDropbox size={31} color="#000" /> },
  { id: 'stile', icon: <STile /> },
  { id: 'help', icon: <HelpIcon /> },
  { id: 'whatsapp', icon: <WhatsAppWrap><FaWhatsapp size={24} /></WhatsAppWrap>, dot: true },
  { id: 'spotify', icon: <SpotifyIcon />, dot: true },
];

const App = () => (
  <Window>
    <GlobalStyle />
    <TitleBar>
      <AppIcon />
      <TitleText>Circuit Wizard - [Untitled *]</TitleText>
      <Caption><MinIcon /></Caption>
      <Caption><RestoreIcon /></Caption>
      <Caption><CloseIcon /></Caption>
    </TitleBar>

    <MenuBar>
      <Grip />
      <MenuIconWrap><AppIcon size={22} /></MenuIconWrap>
      {MENU.map(([name, pad]) => <MenuItem key={name} $pad={pad}>{name}</MenuItem>)}
      <MdiButtons>
        <MdiButton><MdiMin /></MdiButton>
        <MdiButton><MdiRestore /></MdiButton>
        <MdiButton $ml={2}><MdiX /></MdiButton>
      </MdiButtons>
    </MenuBar>

    <ToolBar>
      <ToolButton><Doc /></ToolButton>
      <ToolButton><OpenFolder /></ToolButton>
      <ToolButton><Floppy /></ToolButton>
      <ToolSep $w={7} />
      <ToolButton><Printer /></ToolButton>
      <ToolSep $w={7} />
      <ToolButton><Scissors /></ToolButton>
      <ToolButton><CopyIcon /></ToolButton>
      <ToolButton><PasteIcon /></ToolButton>
      <ToolSep $w={6} />
      <ToolButton><UndoIcon c="#1e46b4" /></ToolButton>
      <ToolButton><UndoIcon c="#b0b0b0" flip /></ToolButton>
      <ToolSep $w={9} />
      <ToolButton $pressed><PlayIcon /></ToolButton>
      <ToolSep $w={3} $blank />
      <ToolButton><PauseIcon /></ToolButton>
      <ToolButton><StopIcon /></ToolButton>
      <ToolSep $w={10} />
      <ToolButton $pressed $w={28}><Pointer /></ToolButton>
      <ToolButton $w={28}><Hand /></ToolButton>
      <ToolButton $w={28}><Magnifier /></ToolButton>
      <ToolButton $w={28}><GreyX /></ToolButton>
      <ToolSep $w={9} />
      <ToolButton $w={28}><Probe /></ToolButton>
      <ToolButton $w={28}><Bars /></ToolButton>
      <ToolButton $w={28}><GreyCircuit /></ToolButton>
      <ToolSep $w={10} />
      <ToolButton $w={28}><GreyTri /></ToolButton>
      <ToolButton $w={28}><GreyTri flip /></ToolButton>
      <ToolSep $w={10} />
      <ToolButton $pressed $w={28}><Toolbox size={20} /></ToolButton>
    </ToolBar>

    <Main>
      <ViewTabs>
        <ViewTabsInner>
          <TopRule />
          <ViewTab $h={65}>Normal</ViewTab>
          <ViewTab $h={109}>Voltage Levels</ViewTab>
          <ViewTab $h={92}>Current Flow</ViewTab>
          <ViewTab $h={95} $active $top={6}>Logic Levels</ViewTab>
          <ViewTab $h={78} $top={6} $rule>Standard</ViewTab>
          <ViewTab $h={60} $top={8}>More<MoreArrow /></ViewTab>
        </ViewTabsInner>
      </ViewTabs>

      <Center>
        <CanvasRow>
          <Canvas>
            <Sheet><Circuit /></Sheet>
          </Canvas>
          <VScroll>
            <ScrollBtn><Arrow $dir="up" /></ScrollBtn>
            <Thumb $h={509} />
            <Track />
            <ScrollBtn><Arrow $dir="down" /></ScrollBtn>
          </VScroll>
        </CanvasRow>
        <SheetTabs>
          <TabArrows>
            <Arrow $dir="left" $c="#b0b0b0" />
            <Arrow $dir="right" />
          </TabArrows>
          <TabStroke width="6" height="20" viewBox="0 0 6 20"><path d="M1 1 5 19" /></TabStroke>
          <SheetTab $w={117} $active>Circuit Diagram</SheetTab>
          <TabStroke width="12" height="20" viewBox="0 0 12 20"><path d="M8 1 3 19M6.500 9 9.500 19" /></TabStroke>
          <SheetTab $w={83}>PCB Layout</SheetTab>
          <TabStroke width="12" height="20" viewBox="0 0 12 20"><path d="M8 1 3 19M6.500 9 9.500 19" /></TabStroke>
          <SheetTab $w={115}>Bill of Materials</SheetTab>
          <TabStroke width="8" height="20" viewBox="0 0 8 20"><path d="M7 1 2 19" /></TabStroke>
          <HScroll>
            <ScrollBtn $w="23px" $h="100%"><Arrow $dir="left" /></ScrollBtn>
            <HThumb />
            <ScrollBtn $w="23px" $h="100%"><Arrow $dir="right" /></ScrollBtn>
          </HScroll>
        </SheetTabs>
      </Center>

      <Dock>
        <DockHead>
          <DockGrip />
          <DockClose><svg width="9" height="9" viewBox="0 0 9 9"><path d="M1 1l7 7M8 1 1 8" stroke="#333" /></svg></DockClose>
        </DockHead>
        <DockBody>
          <DockMain>
            <Combo>
              <FolderTiny />
              <ComboLabel>Logic Gates</ComboLabel>
              <ScrollBtn $w="21px" $h="22px"><Arrow $dir="down" /></ScrollBtn>
            </Combo>
            <GalleryFrame>
              <GalleryList>
                <GroupTitle>Logic Input/Output</GroupTitle>
                <Rows $top={6}>
                  {GROUP_ONE.map((row) => (
                    <GalleryRow key={row.label}>
                      <IconCell>{row.icon}</IconCell>
                      <ItemLink>{row.label}</ItemLink>
                    </GalleryRow>
                  ))}
                </Rows>
                <GroupTitle $top={14}>Standard Gates</GroupTitle>
                <Rows $top={5}>
                  {GROUP_TWO.map((row) => (
                    <GalleryRow key={row.label} $h={row.h}>
                      <IconCell>{row.icon}</IconCell>
                      <ItemLink>{row.label}</ItemLink>
                    </GalleryRow>
                  ))}
                </Rows>
              </GalleryList>
              <GalleryScroll>
                <ScrollBtn><Arrow $dir="up" /></ScrollBtn>
                <Thumb $h={655} />
                <Track />
                <ScrollBtn><Arrow $dir="down" /></ScrollBtn>
              </GalleryScroll>
            </GalleryFrame>
          </DockMain>
          <SideTabs>
            <SideTab $h={97} $pt={3}>
              <AppleIcon />
              <SideLabel>Assistant</SideLabel>
            </SideTab>
            <SideTab $h={91} $active $pt={6}>
              <Toolbox size={20} />
              <SideLabel>Gallery</SideLabel>
            </SideTab>
          </SideTabs>
        </DockBody>
      </Dock>
    </Main>

    <StatusBar>
      <VoltLabel $w={1102}>Press F1 for help</VoltLabel>
      <VoltLabel $w={77}>Voltage:</VoltLabel>
      <VoltLabel $w={25}>-5</VoltLabel>
      <VoltBar $w={153}>
        <VoltSeg $grow={0.12} $bg="linear-gradient(90deg,#e8f0ff,#4080ff)" />
        {SCALE_LOW.map((c) => <VoltSeg key={c} $bg={c} />)}
        <VoltMark $x={8} />
      </VoltBar>
      <VoltLabel $w={30} $align="center">0</VoltLabel>
      <VoltBar $w={153}>
        {SCALE_HIGH.map((c) => <VoltSeg key={c} $bg={c} />)}
        <VoltSeg $grow={0.12} $bg="linear-gradient(90deg,#ff5a3c,#fde0d8)" />
        <VoltMark $x={145} />
      </VoltBar>
      <VoltLabel $w={55} $pl={8}>+5</VoltLabel>
      <VoltLabel $w={38}>Time:</VoltLabel>
      <StatusBox $ml={0}>7.847 s</StatusBox>
      <StatusBox $pl={3}><Magnifier lens="none" c="#222" w={16} /> 102%</StatusBox>
      <StatusBox>Ready</StatusBox>
    </StatusBar>

    <TaskBar>
      {TASK_ICONS.map((t) => (
        <TaskItem key={t.id}>
          {t.icon}
          {t.dot && <TaskDot />}
        </TaskItem>
      ))}
      <TaskItem $active>
        <AppIcon size={32} />
        <TaskDot $active />
      </TaskItem>
      <Tray>
        <TrayIcon $w={30}><Chevron /></TrayIcon>
        <TrayIcon $w={28}><SyncIcon /></TrayIcon>
        <TrayLang>ENG<br />IN</TrayLang>
        <TrayIcon $w={36}><Wifi /></TrayIcon>
        <TrayIcon $w={23}><Speaker /></TrayIcon>
        <TrayIcon $w={37}><Battery /></TrayIcon>
        <TrayClock>17:13<br />10-11-2021</TrayClock>
        <Badge>3</Badge>
      </Tray>
    </TaskBar>
  </Window>
);

export default App;
